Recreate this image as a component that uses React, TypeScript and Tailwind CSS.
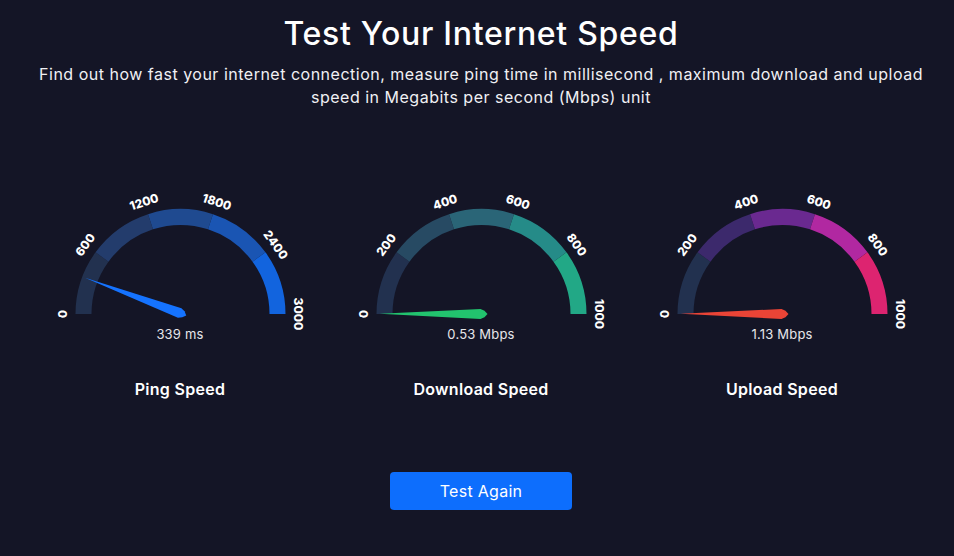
import React from "react";

type GaugeProps = {
  max: number;
  value: number;
  colors: string[];
  needle: string;
  unit: string;
  label: string;
};

const CX = 150.5;
const CY = 124;
const RO = 105;
const RI = 89;
const RL = 118;

function pt(r: number, deg: number) {
  const t = (deg * Math.PI) / 180;
  return [CX - r * Math.cos(t), CY - r * Math.sin(t)];
}

function seg(a1: number, a2: number) {
  const [x1, y1] = pt(RO, a1);
  const [x2, y2] = pt(RO, a2);
  const [x3, y3] = pt(RI, a2);
  const [x4, y4] = pt(RI, a1);
  return `M ${x1} ${y1} A ${RO} ${RO} 0 0 1 ${x2} ${y2} L ${x3} ${y3} A ${RI} ${RI} 0 0 0 ${x4} ${y4} Z`;
}

function Gauge({ max, value, colors, needle, unit, label }: GaugeProps) {
  const ang = (value / max) * 180;
  const ticks = [0, 1, 2, 3, 4, 5];
  return (
    <div className="flex flex-col items-center w-[301px]">
      <svg width="301" height="134" viewBox="0 0 301 134" className="overflow-visible">
        {colors.map((c, i) => (
          <path key={i} d={seg(i * 36, (i + 1) * 36)} fill={c} />
        ))}
        {ticks.map((i) => {
          const a = i * 36;
          const [x, y] = pt(RL, a);
          return (
            <text
              key={i}
              x={x}
              y={y}
              fill="#ffffff"
              fontSize="12"
              fontWeight="800"
              textAnchor="middle"
              dominantBaseline="central"
              fontFamily="Inter, 'Noto Sans', sans-serif"
              transform={`rotate(${a - 90} ${x} ${y})`}
            >
              {(max / 5) * i}
            </text>
          );
        })}
        <g transform={`translate(${CX + 2} ${CY}) rotate(${180 + ang})`}>
          <polygon points="104,0 3,-5 -1,-3.2 -4,0 -1,3.2 3,5" fill={needle} />
        </g>
      </svg>
      <div className="text-[13px] leading-[20px] text-[#e6e6ea] tracking-[0.2px]">
        {value} {unit}
      </div>
      <div className="mt-[35px] text-[16px] leading-[20px] font-semibold text-white tracking-[0.3px]">{label}</div>
    </div>
  );
}

export default function App() {
  return (
    <div
      className="min-h-screen w-full bg-[#141526] text-white flex flex-col items-center pl-[8px]"
      style={{ fontFamily: "Inter, 'Noto Sans', sans-serif" }}
    >
      <h1 className="mt-[12px] text-[32px] leading-[44px] font-medium tracking-[0.7px]">Test Your Internet Speed</h1>
      <p className="mt-[7px] text-center text-[16px] leading-[23px] tracking-[0.5px] text-[#f0f0f4]">
        Find out how fast your internet connection, measure ping time in millisecond , maximum download and upload
        <br />
        speed in Megabits per second (Mbps) unit
      </p>
      <div className="mt-[81px] flex">
        <Gauge
          max={3000}
          value={339}
          colors={["#22314f", "#233c6c", "#1f4a90", "#1a55b3", "#1264de"]}
          needle="#1573ff"
          unit="ms"
          label="Ping Speed"
        />
        <Gauge
          max={1000}
          value={0.53}
          colors={["#22314f", "#274a63", "#2a6577", "#258b88", "#22a886"]}
          needle="#22c36e"
          unit="Mbps"
          label="Download Speed"
        />
        <Gauge
          max={1000}
          value={1.13}
          colors={["#22314f", "#3c296c", "#6a2990", "#b128a1", "#dd2470"]}
          needle="#ea4436"
          unit="Mbps"
          label="Upload Speed"
        />
      </div>
      <button className="mt-[73px] w-[182px] h-[38px] rounded-[4px] bg-[#0d6efd] text-[16px] text-white tracking-[0.3px]">
        Test Again
      </button>
    </div>
  );
}
